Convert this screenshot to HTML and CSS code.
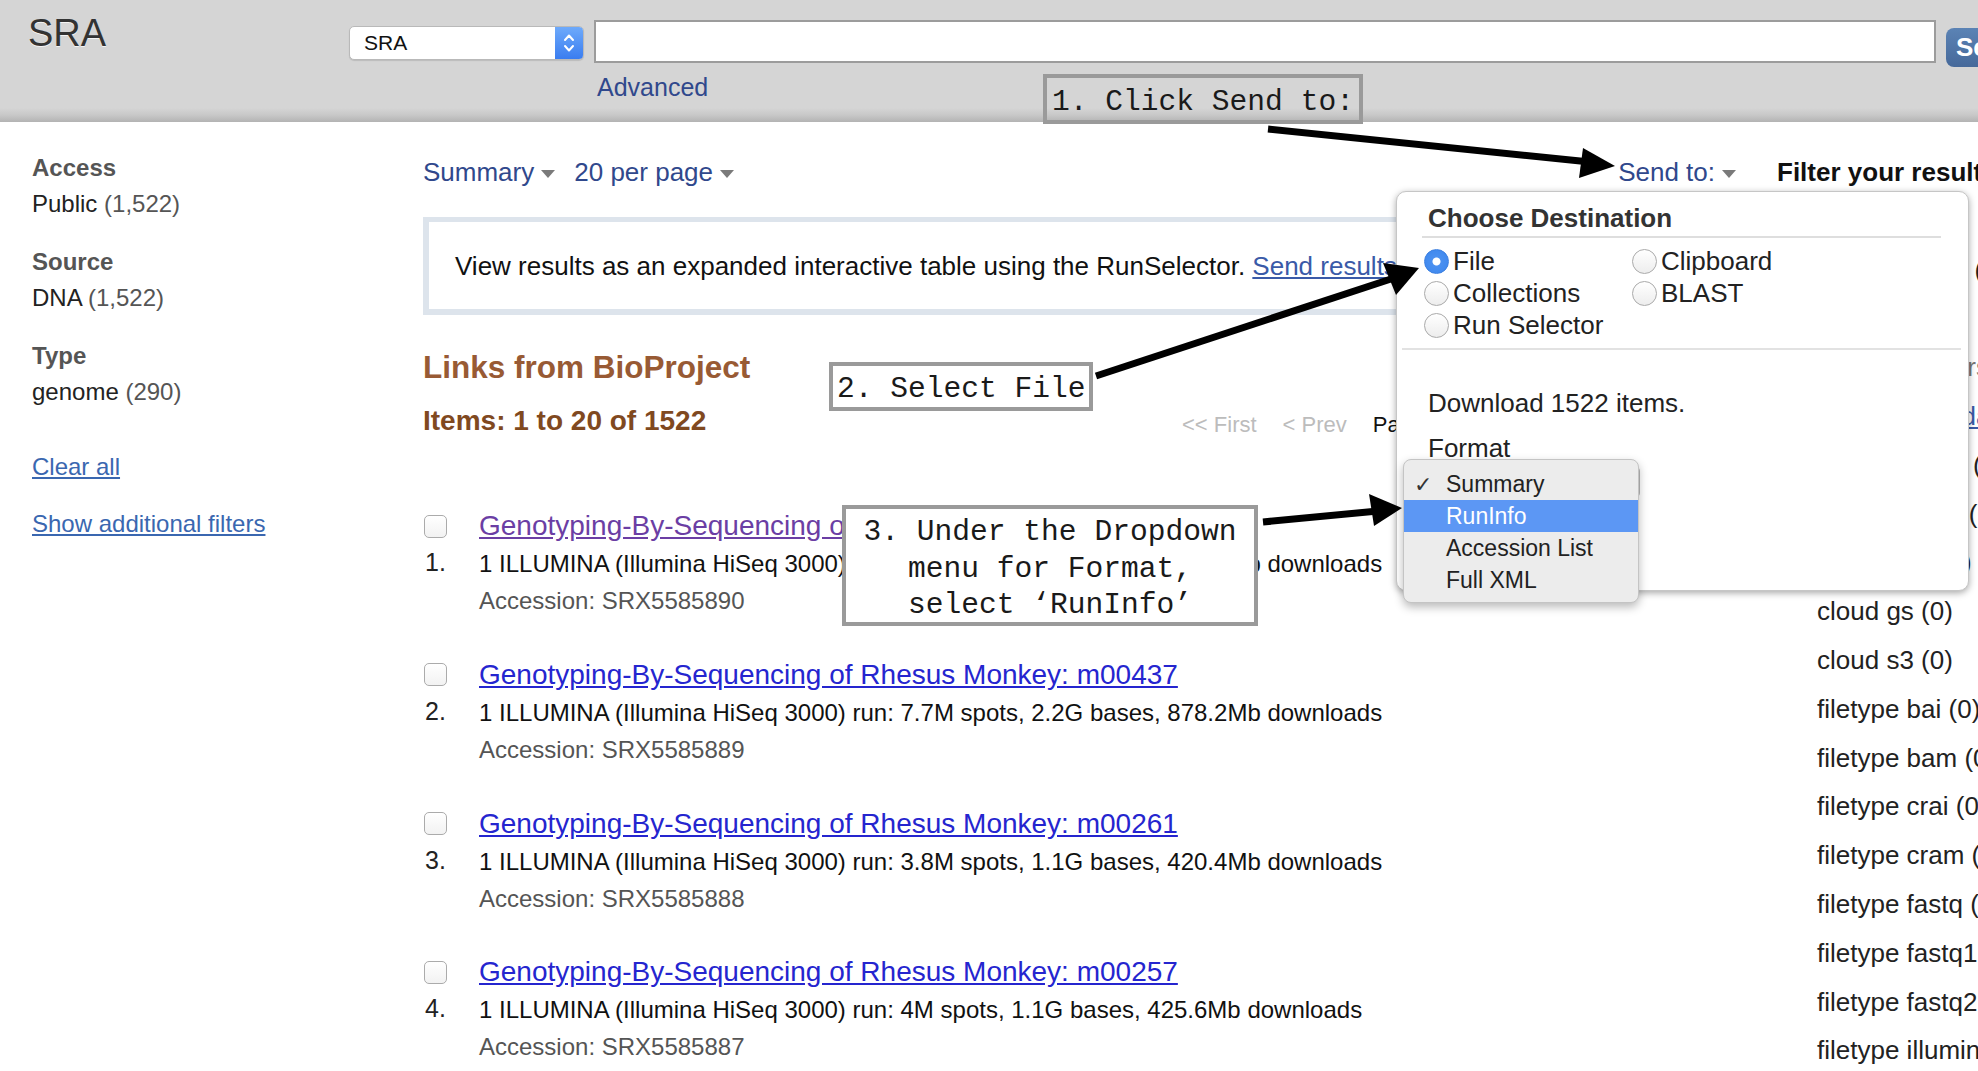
FILE: index.html
```html
<!DOCTYPE html>
<html lang="en">
<head>
<meta charset="utf-8">
<title>SRA</title>
<link rel="stylesheet" href="styles.css">
</head>
<body>
<header class="masthead">
  <div class="logo">SRA</div>
  <div class="search">
    <div class="search-row">
      <div class="db-select">
        <span>SRA</span>
        <span class="db-arrows">
          <svg width="12" height="22" viewBox="0 0 12 22"><path d="M2 8 L6 3.5 L10 8 M2 14 L6 18.5 L10 14" fill="none" stroke="#fff" stroke-width="2" stroke-linecap="round" stroke-linejoin="round"/></svg>
        </span>
      </div>
      <div class="search-input"></div>
      <button class="search-btn">Search</button>
    </div>
    <a class="advanced">Advanced</a>
  </div>
</header>

<div class="page">
  <aside class="facets">
    <div class="facet">
      <div class="facet-h">Access</div>
      <div class="facet-v">Public <span class="cnt">(1,522)</span></div>
    </div>
    <div class="facet">
      <div class="facet-h">Source</div>
      <div class="facet-v">DNA <span class="cnt">(1,522)</span></div>
    </div>
    <div class="facet">
      <div class="facet-h">Type</div>
      <div class="facet-v">genome <span class="cnt">(290)</span></div>
    </div>
    <a class="facet-link clear">Clear all</a>
    <a class="facet-link more">Show additional filters</a>
  </aside>

  <main class="results">
    <div class="toolbar">
      <div class="tb-left">
        <span class="tb-item">Summary<i class="tri"></i></span>
        <span class="tb-item">20 per page<i class="tri"></i></span>
      </div>
      <span class="tb-item">Send to:<i class="tri"></i></span>
    </div>

    <div class="infobox">View results as an expanded interactive table using the RunSelector. <a class="ulink">Send results to Run selector</a></div>

    <h2 class="links-h">Links from BioProject</h2>
    <div class="items-row">
      <div class="items-count">Items: 1 to 20 of 1522</div>
      <div class="pager"><span>&lt;&lt; First</span><span>&lt; Prev</span><span class="pg">Page 1 of 77</span></div>
    </div>

    <ol class="rslt-list">
      <li class="rslt">
        <span class="cb"></span>
        <a class="title visited">Genotyping-By-Sequencing of Rhesus Monkey: m00445</a>
        <span class="num">1.</span>
        <div class="desc">1 ILLUMINA (Illumina HiSeq 3000) run: 7.4M spots, 2.1G bases, 834.3Mb downloads</div>
        <div class="acc">Accession: SRX5585890</div>
      </li>
      <li class="rslt">
        <span class="cb"></span>
        <a class="title">Genotyping-By-Sequencing of Rhesus Monkey: m00437</a>
        <span class="num">2.</span>
        <div class="desc">1 ILLUMINA (Illumina HiSeq 3000) run: 7.7M spots, 2.2G bases, 878.2Mb downloads</div>
        <div class="acc">Accession: SRX5585889</div>
      </li>
      <li class="rslt">
        <span class="cb"></span>
        <a class="title">Genotyping-By-Sequencing of Rhesus Monkey: m00261</a>
        <span class="num">3.</span>
        <div class="desc">1 ILLUMINA (Illumina HiSeq 3000) run: 3.8M spots, 1.1G bases, 420.4Mb downloads</div>
        <div class="acc">Accession: SRX5585888</div>
      </li>
      <li class="rslt">
        <span class="cb"></span>
        <a class="title">Genotyping-By-Sequencing of Rhesus Monkey: m00257</a>
        <span class="num">4.</span>
        <div class="desc">1 ILLUMINA (Illumina HiSeq 3000) run: 4M spots, 1.1G bases, 425.6Mb downloads</div>
        <div class="acc">Accession: SRX5585887</div>
      </li>
    </ol>
  </main>

  <aside class="filters">
    <div class="filters-h">Filter your results:</div>
    <ul class="filter-list">
      <li>type genome (290)</li>
      <li>All (1,522)</li>
      <li class="muted">Manage Filters</li>
      <li><a class="ulink">Find related data</a></li>
      <li>layout paired (0)</li>
      <li>layout single (0)</li>
      <li>cloud aws (0)</li>
      <li>cloud gs (0)</li>
      <li>cloud s3 (0)</li>
      <li>filetype bai (0)</li>
      <li>filetype bam (0)</li>
      <li>filetype crai (0)</li>
      <li>filetype cram (0)</li>
      <li>filetype fastq (0)</li>
      <li>filetype fastq1 (0)</li>
      <li>filetype fastq2 (0)</li>
      <li>filetype illumina (0)</li>
    </ul>
  </aside>
</div>

<div class="send-dialog">
  <div class="dlg-h">Choose Destination</div>
  <div class="dest-grid">
    <label class="opt"><span class="radio on"></span>File</label>
    <label class="opt"><span class="radio"></span>Clipboard</label>
    <label class="opt"><span class="radio"></span>Collections</label>
    <label class="opt"><span class="radio"></span>BLAST</label>
    <label class="opt"><span class="radio"></span>Run Selector</label>
  </div>
  <div class="dlg-sep"></div>
  <div class="dlg-line dl">Download 1522 items.</div>
  <div class="dlg-line">Format</div>
  <div class="fmt-select"><span class="fmt-arrow"></span></div>
</div>

<div class="format-menu">
  <div class="fm-item"><span class="chk">✓</span>Summary</div>
  <div class="fm-item sel">RunInfo</div>
  <div class="fm-item">Accession List</div>
  <div class="fm-item">Full XML</div>
</div>

<div class="callout c1">1. Click Send to:</div>
<div class="callout c2">2. Select File</div>
<div class="callout c3">3. Under the Dropdown<br>menu for Format,<br>select ‘RunInfo’</div>

<svg class="arrows" width="1978" height="1071" viewBox="0 0 1978 1071">
  <line x1="1268" y1="129" x2="1590" y2="162" stroke="#000" stroke-width="7"/>
  <polygon points="1583,148 1615,166 1579,178" fill="#000"/>
  <line x1="1096" y1="376" x2="1394" y2="278" stroke="#000" stroke-width="7"/>
  <polygon points="1383,263 1419,268 1396,295" fill="#000"/>
  <line x1="1263" y1="522" x2="1378" y2="511" stroke="#000" stroke-width="7"/>
  <polygon points="1369,494 1402,508 1374,526" fill="#000"/>
</svg>
</body>
</html>
```

FILE: styles.css
```css
* { box-sizing: border-box; }
html, body { margin: 0; padding: 0; }
body {
  width: 1978px;
  height: 1071px;
  overflow: hidden;
  position: relative;
  background: #fff;
  font-family: "Liberation Sans", Arial, sans-serif;
  color: #222;
}
ol, ul { margin: 0; padding: 0; list-style: none; }
h2 { margin: 0; }

/* header */
.masthead {
  height: 122px;
  display: flex;
  align-items: flex-start;
  padding-left: 28px;
  background: linear-gradient(to bottom, #d5d5d5 0, #d5d5d5 108px, #c8c8c8 115px, #b3b3b3 122px);
}
.logo {
  width: 321px;
  flex: none;
  margin-top: 14px;
  font-size: 38px;
  line-height: 38px;
  color: #333;
  text-shadow: 0 1px 0 #f4f4f4;
}
.search { flex: none; padding-top: 20px; }
.search-row { display: flex; align-items: flex-start; }
.db-select {
  flex: none;
  width: 235px;
  height: 34px;
  margin-top: 6px;
  background: #fff;
  border: 1px solid #b9b9b9;
  border-radius: 5px;
  display: flex;
  align-items: center;
  justify-content: space-between;
  padding-left: 14px;
  font-size: 21px;
  color: #111;
  box-shadow: 0 1px 1px rgba(0,0,0,.12);
  overflow: hidden;
}
.db-arrows {
  width: 28px;
  height: 100%;
  background: linear-gradient(#6eaafb, #3a7df0);
  display: flex;
  align-items: center;
  justify-content: center;
}
.search-input {
  flex: none;
  width: 1342px;
  height: 43px;
  margin-left: 10px;
  background: #fff;
  border: 2px solid #9c9c9c;
}
.search-btn {
  flex: none;
  margin-left: 10px;
  margin-top: 8px;
  height: 39px;
  padding: 0 14px 0 10px;
  background: linear-gradient(#5b83b5, #46699a);
  border: none;
  border-radius: 8px;
  color: #fff;
  font: bold 26px "Liberation Sans", Arial, sans-serif;
}
.advanced {
  display: block;
  margin: 5px 0 0 248px;
  font-size: 25px;
  line-height: 30px;
  color: #30488c;
}

/* page grid */
.page {
  display: grid;
  grid-template-columns: 423px 1354px 1fr;
}

/* left facets */
.facets {
  padding: 28px 0 0 32px;
  font-size: 24px;
  line-height: 36px;
}
.facet { margin-bottom: 22px; }
.facet-h { font-weight: bold; color: #555; }
.facet-v { color: #222; }
.cnt { color: #555; }
.facet-link {
  display: block;
  color: #3a67b0;
  text-decoration: underline;
}
.facet-link.clear { margin-top: 39px; }
.facet-link.more { margin-top: 21px; }

/* results column */
.results { padding: 32px 41px 0 0; }
.toolbar {
  display: flex;
  justify-content: space-between;
  align-items: center;
  height: 36px;
  font-size: 26px;
  line-height: 36px;
  color: #30488c;
}
.tb-left { display: flex; gap: 19px; }
.tb-item { display: inline-flex; align-items: center; }
.tri {
  display: inline-block;
  margin-left: 7px;
  margin-top: 4px;
  width: 0;
  height: 0;
  border-left: 7px solid transparent;
  border-right: 7px solid transparent;
  border-top: 8px solid #7a7a7a;
}
.infobox {
  margin-top: 27px;
  border: 6px solid #dde4ec;
  border-top-width: 5px;
  padding: 26px 20px 25px 26px;
  font-size: 26px;
  line-height: 36px;
  color: #111;
  white-space: nowrap;
  overflow: hidden;
}
.ulink { color: #3a5aa8; text-decoration: underline; }
.links-h {
  margin-top: 32px;
  font-size: 31.5px;
  line-height: 40px;
  font-weight: bold;
  color: #985a34;
}
.items-row {
  margin-top: 16px;
  display: grid;
  grid-template-columns: 759px auto;
  align-items: center;
  height: 36px;
}
.items-count {
  font-size: 28px;
  line-height: 36px;
  font-weight: bold;
  color: #80491f;
}
.pager {
  display: flex;
  gap: 26px;
  font-size: 22px;
  padding-top: 8px;
  color: #bcbcbc;
  white-space: nowrap;
}
.pager .pg { color: #111; }

.rslt-list { margin-top: 68px; }
.rslt {
  display: grid;
  grid-template-columns: 56px 1fr;
  grid-template-rows: 38px 38px 36px;
  margin-bottom: 36.8px;
}
.cb {
  align-self: center;
  margin-left: 1px;
  width: 23px;
  height: 23px;
  border: 1px solid #ababab;
  border-radius: 5px;
  background: linear-gradient(#fff, #f2f2f2);
}
.title {
  font-size: 28px;
  line-height: 38px;
  color: #2525cf;
  text-decoration: underline;
  white-space: nowrap;
}
.title.visited { color: #6b3ea4; }
.num {
  font-size: 25px;
  line-height: 34px;
  color: #222;
  padding-left: 2px;
}
.desc {
  font-size: 24px;
  line-height: 38px;
  color: #111;
  white-space: nowrap;
}
.acc {
  grid-column: 2;
  font-size: 24px;
  line-height: 36px;
  color: #555;
}

/* right filters */
.filters { padding-top: 32px; white-space: nowrap; }
.filters-h {
  font-size: 26px;
  line-height: 36px;
  font-weight: bold;
  color: #111;
}
.filter-list {
  margin-top: 55.6px;
  padding-left: 40px;
  font-size: 26px;
  line-height: 48.8px;
  color: #222;
}
.filter-list .muted { color: #777; }

/* send-to dialog (overlay) */
.send-dialog {
  position: absolute;
  left: 1396px;
  top: 191px;
  width: 573px;
  height: 400px;
  background: #fff;
  border: 1px solid #c6c6c6;
  border-radius: 10px;
  box-shadow: 0 2px 7px rgba(0,0,0,.35);
}
.dlg-h {
  margin: 10px 27px 0 25px;
  padding: 0 0 2px 6px;
  border-bottom: 2px solid #dedede;
  font-size: 26px;
  line-height: 32px;
  font-weight: bold;
  color: #333;
}
.dest-grid {
  display: grid;
  grid-template-columns: 208px auto;
  grid-auto-rows: 32px;
  margin: 7px 0 0 27px;
}
.opt {
  display: flex;
  align-items: center;
  gap: 4px;
  font-size: 26px;
  color: #222;
}
.radio {
  flex: none;
  width: 25px;
  height: 25px;
  border-radius: 50%;
  border: 1px solid #aaa;
  background: linear-gradient(#fff, #ededed);
}
.radio.on {
  border-color: #3a7ee0;
  background: radial-gradient(circle, #fff 0, #fff 3.5px, #4a90f0 4.5px, #3b86ee 100%);
}
.dlg-sep {
  margin: 7px 7px 0 5px;
  height: 2px;
  background: #e2e2e2;
}
.dlg-line {
  padding-left: 31px;
  font-size: 26px;
  line-height: 36px;
  color: #222;
}
.dlg-line.dl { margin-top: 35px; margin-bottom: 9px; }
.fmt-select {
  margin-left: 31px;
  width: 212px;
  height: 32px;
  border: 1px solid #b9b9b9;
  border-radius: 5px;
  display: flex;
  justify-content: flex-end;
  overflow: hidden;
}
.fmt-arrow { width: 24px; height: 100%; background: linear-gradient(#6eaafb, #2f6fe0); }

/* native format popup (overlay) */
.format-menu {
  position: absolute;
  left: 1403px;
  top: 459px;
  width: 236px;
  height: 144px;
  padding-top: 8px;
  background: #ececec;
  border: 1px solid #c4c4c4;
  border-radius: 8px;
  box-shadow: 0 4px 10px rgba(0,0,0,.28);
}
.fm-item {
  display: flex;
  align-items: center;
  height: 32px;
  padding-left: 42px;
  font-size: 23px;
  color: #222;
}
.fm-item.sel { background: #5c97f4; color: #fff; }
.chk {
  width: 0;
  margin-left: -32px;
  margin-right: 32px;
  font-family: "DejaVu Sans", sans-serif;
  font-size: 22px;
  color: #333;
}

/* annotation callouts (overlay) */
.callout {
  position: absolute;
  border: 4px solid #9a9a9a;
  font-family: "Liberation Mono", "Courier New", monospace;
  font-size: 29.6px;
  color: #1a1a1a;
  white-space: nowrap;
}
.c1 {
  left: 1043px;
  top: 74px;
  width: 320px;
  height: 50px;
  padding: 6px 0 0 5px;
  line-height: 36px;
}
.c2 {
  left: 829px;
  top: 362px;
  width: 264px;
  height: 49px;
  padding: 6px 0 0 4px;
  line-height: 35px;
  background: #fff;
}
.c3 {
  left: 842px;
  top: 505px;
  width: 416px;
  height: 121px;
  padding-top: 5px;
  line-height: 36.5px;
  text-align: center;
  background: #fff;
}
.arrows {
  position: absolute;
  left: 0;
  top: 0;
  pointer-events: none;
}
```
